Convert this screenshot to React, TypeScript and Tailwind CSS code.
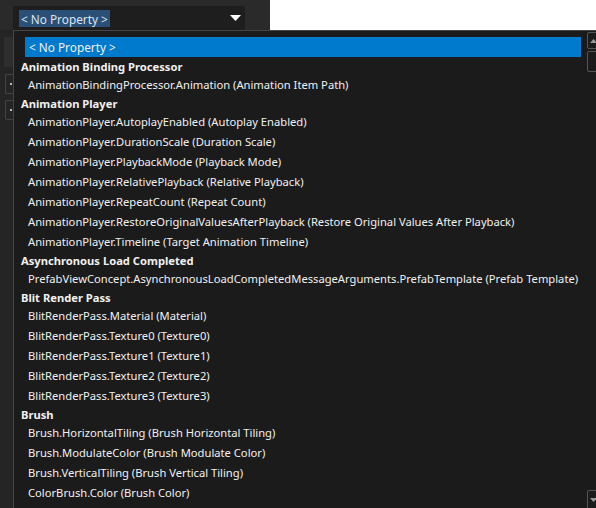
import React from 'react';

type Group = { title: string; items: string[] };

const groups: Group[] = [
  {
    title: 'Animation Binding Processor',
    items: ['AnimationBindingProcessor.Animation (Animation Item Path)'],
  },
  {
    title: 'Animation Player',
    items: [
      'AnimationPlayer.AutoplayEnabled (Autoplay Enabled)',
      'AnimationPlayer.DurationScale (Duration Scale)',
      'AnimationPlayer.PlaybackMode (Playback Mode)',
      'AnimationPlayer.RelativePlayback (Relative Playback)',
      'AnimationPlayer.RepeatCount (Repeat Count)',
      'AnimationPlayer.RestoreOriginalValuesAfterPlayback (Restore Original Values After Playback)',
      'AnimationPlayer.Timeline (Target Animation Timeline)',
    ],
  },
  {
    title: 'Asynchronous Load Completed',
    items: ['PrefabViewConcept.AsynchronousLoadCompletedMessageArguments.PrefabTemplate (Prefab Template)'],
  },
  {
    title: 'Blit Render Pass',
    items: [
      'BlitRenderPass.Material (Material)',
      'BlitRenderPass.Texture0 (Texture0)',
      'BlitRenderPass.Texture1 (Texture1)',
      'BlitRenderPass.Texture2 (Texture2)',
      'BlitRenderPass.Texture3 (Texture3)',
    ],
  },
  {
    title: 'Brush',
    items: [
      'Brush.HorizontalTiling (Brush Horizontal Tiling)',
      'Brush.ModulateColor (Brush Modulate Color)',
      'Brush.VerticalTiling (Brush Vertical Tiling)',
      'ColorBrush.Color (Brush Color)',
    ],
  },
];

function Caret({ up }: { up?: boolean }) {
  return (
    <svg width="7" height="4" viewBox="0 0 7 4">
      {up ? <path d="M0 4 L3.5 0 L7 4 Z" fill="currentColor" /> : <path d="M0 0 L7 0 L3.5 4 Z" fill="currentColor" />}
    </svg>
  );
}

export default function App() {
  return (
    <div
      className="relative w-[596px] h-[508px] overflow-hidden bg-[#252526] text-[11.2px] text-[#f1f1f1]"
      style={{ fontFamily: '"Noto Sans", "Open Sans", sans-serif' }}
    >
      {/* top strip with the combo box */}
      <div className="flex h-[30px]">
        <div className="w-[270px] bg-[#2a2a2a] pt-[6px] pl-[13px]">
          <div className="flex h-[24px] w-[232px] items-center justify-between bg-[#1e1e1e] pl-[6px] pr-[4px]">
            <span className="bg-[#2a5078] px-[2px] pt-px text-[11.8px] leading-[16px] text-[#d8e4f0]">&lt; No Property &gt;</span>
            <svg width="11" height="6" viewBox="0 0 11 6" className="text-white">
              <path d="M0 0 L11 0 L5.5 6 Z" fill="currentColor" />
            </svg>
          </div>
        </div>
        <div className="flex-1 bg-white" />
      </div>

      {/* controls peeking from behind the popup */}
      <div className="flex w-[13px] flex-col items-end">
        <div className="mt-[7px] h-[30px] w-[9px] bg-[#2e2e2e]" />
        <div className="mt-[7px] flex h-[20px] w-[8px] items-center justify-end rounded-l-[2px] border border-r-0 border-[#444]">
          <div className="mr-px h-[2px] w-[2px] bg-[#bbb]" />
        </div>
        <div className="mt-[6px] flex h-[20px] w-[8px] items-center justify-end rounded-l-[2px] border border-r-0 border-[#444]">
          <div className="mr-px h-[2px] w-[2px] bg-[#bbb]" />
        </div>
      </div>

      {/* dropdown popup */}
      <div className="absolute left-[13px] top-[30px] h-[500px] w-[600px] border border-[#454545] bg-[#1b1b1b]">
        <div className="flex">
          <div className="w-[567px] pt-[6px]">
            <div className="ml-[11px] flex h-[20px] items-center bg-[#007acc] pl-[4px] pt-[2px] text-[11.8px]">&lt; No Property &gt;</div>
            {groups.map((g) => (
              <div key={g.title}>
                <div className="flex h-[17px] items-center pl-[7px] pt-[3px] font-bold">{g.title}</div>
                {g.items.map((it) => (
                  <div key={it} className="flex h-[20px] items-center whitespace-nowrap pl-[14px] pt-[3px]">
                    {it}
                  </div>
                ))}
              </div>
            ))}
          </div>
          <div className="ml-[6px] flex w-[12px] flex-col pt-px">
            <div className="flex h-[17px] items-center justify-center rounded-[2px] border border-[#555] text-[#999]">
              <Caret up />
            </div>
            <div className="mt-[2px] h-[21px] rounded-[2px] border border-[#555]" />
          </div>
        </div>
        <div className="absolute left-[573px] top-[459px] flex h-[20px] w-[12px] items-center justify-center rounded-[2px] border border-[#555] bg-[#1b1b1b] text-[#999]">
          <Caret />
        </div>
      </div>
    </div>
  );
}
